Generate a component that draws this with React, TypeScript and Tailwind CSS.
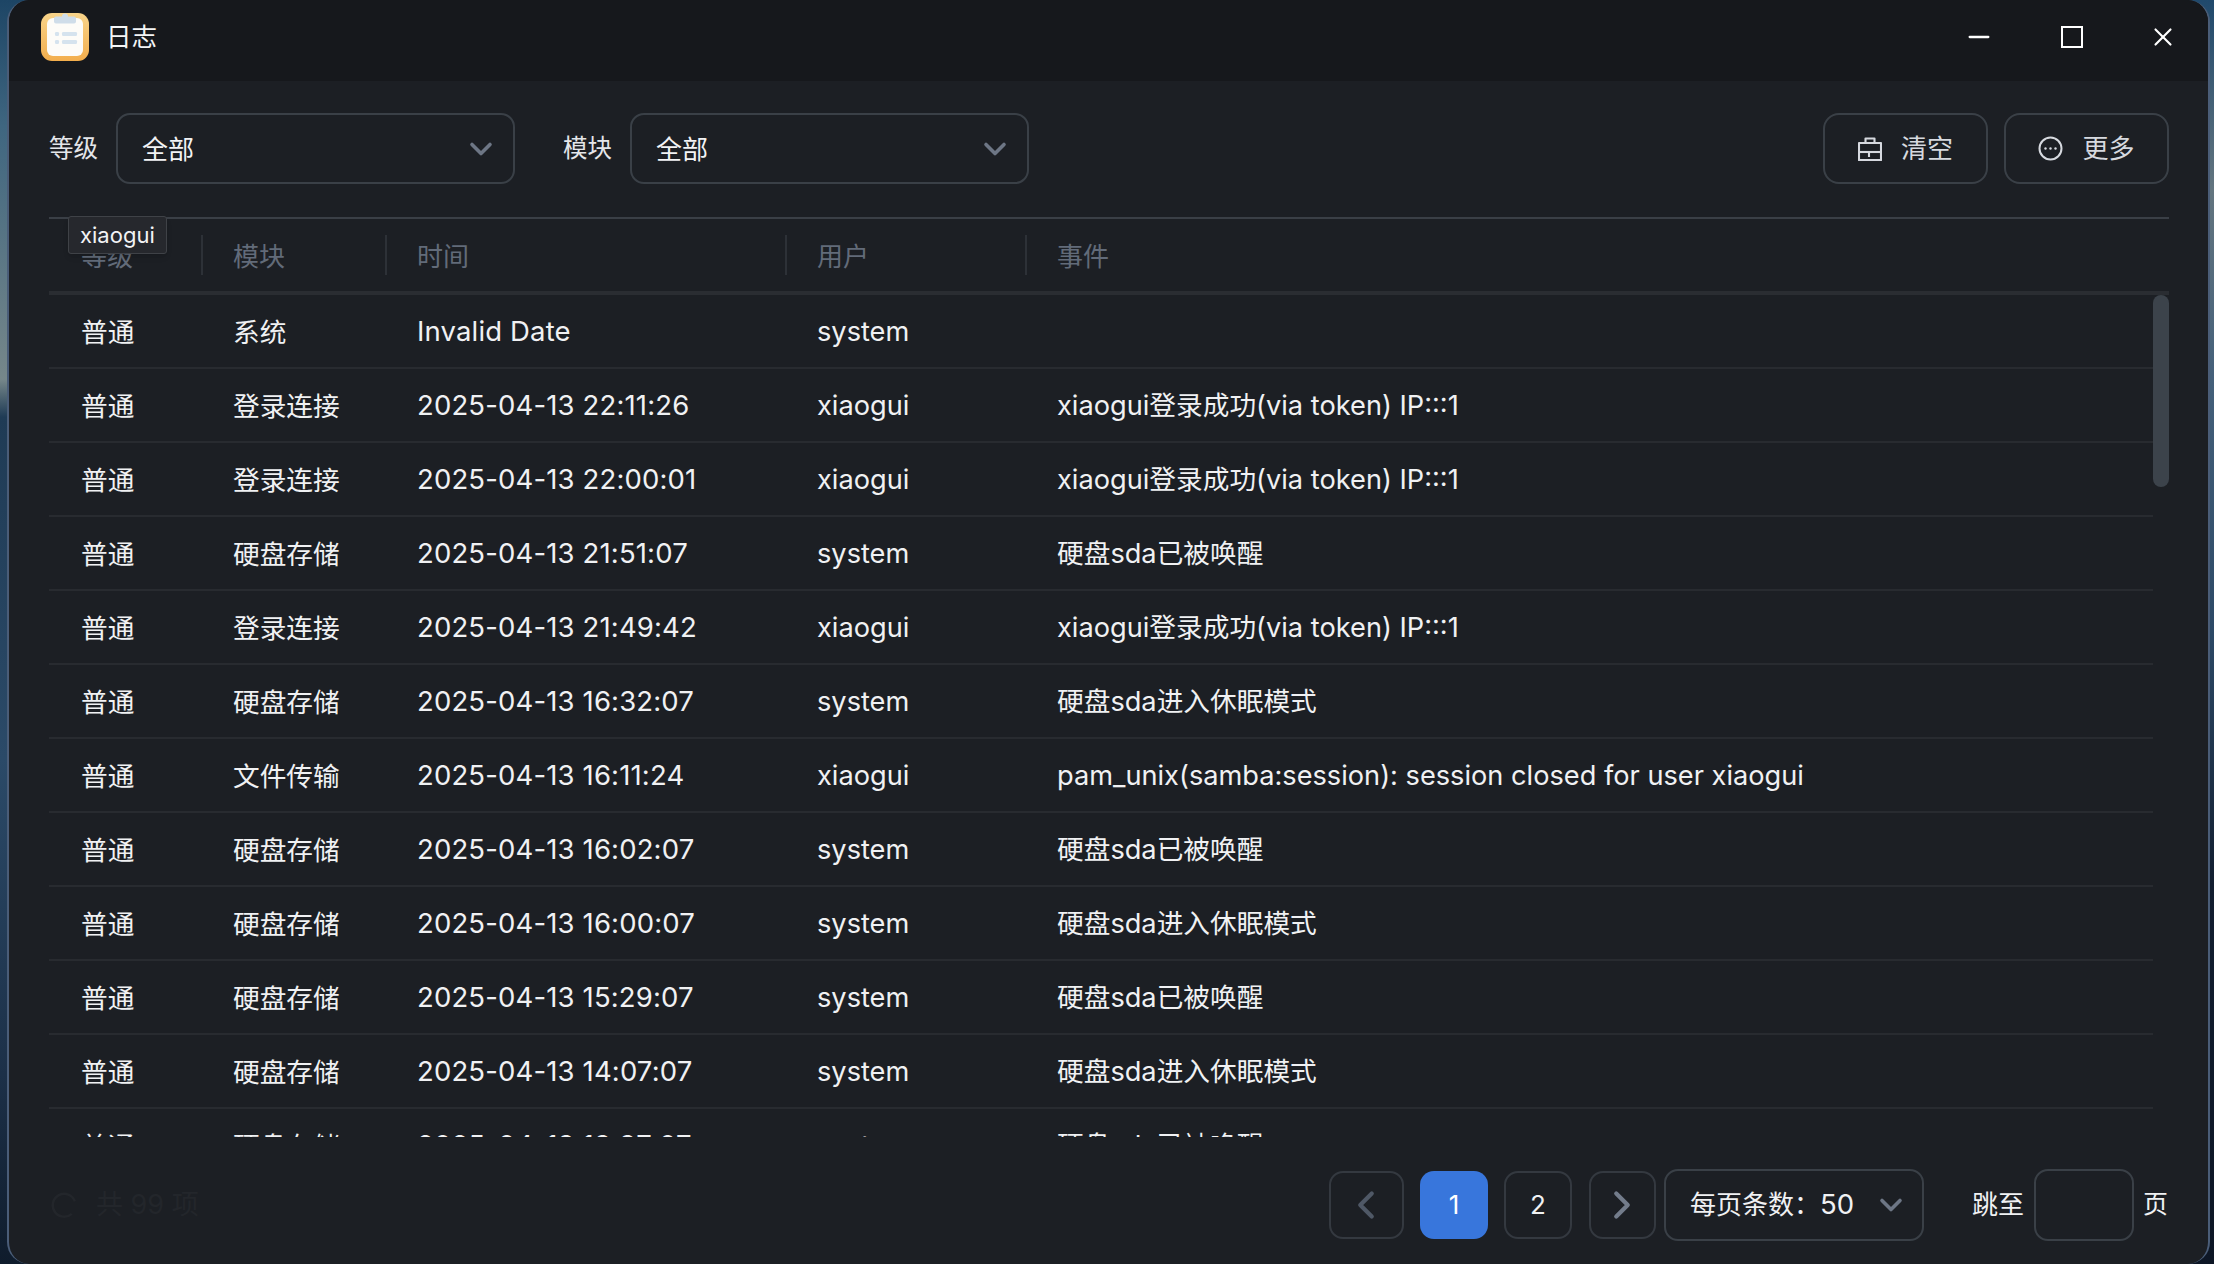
import { ChevronDown, ChevronLeft, ChevronRight, Minus, X } from 'lucide-react'

interface LogRow {
  level: string
  module: string
  time: string
  user: string
  event: string
}

const rows: LogRow[] = [
  { level: '普通', module: '系统', time: 'Invalid Date', user: 'system', event: '' },
  { level: '普通', module: '登录连接', time: '2025-04-13 22:11:26', user: 'xiaogui', event: 'xiaogui登录成功(via token) IP:::1' },
  { level: '普通', module: '登录连接', time: '2025-04-13 22:00:01', user: 'xiaogui', event: 'xiaogui登录成功(via token) IP:::1' },
  { level: '普通', module: '硬盘存储', time: '2025-04-13 21:51:07', user: 'system', event: '硬盘sda已被唤醒' },
  { level: '普通', module: '登录连接', time: '2025-04-13 21:49:42', user: 'xiaogui', event: 'xiaogui登录成功(via token) IP:::1' },
  { level: '普通', module: '硬盘存储', time: '2025-04-13 16:32:07', user: 'system', event: '硬盘sda进入休眠模式' },
  { level: '普通', module: '文件传输', time: '2025-04-13 16:11:24', user: 'xiaogui', event: 'pam_unix(samba:session): session closed for user xiaogui' },
  { level: '普通', module: '硬盘存储', time: '2025-04-13 16:02:07', user: 'system', event: '硬盘sda已被唤醒' },
  { level: '普通', module: '硬盘存储', time: '2025-04-13 16:00:07', user: 'system', event: '硬盘sda进入休眠模式' },
  { level: '普通', module: '硬盘存储', time: '2025-04-13 15:29:07', user: 'system', event: '硬盘sda已被唤醒' },
  { level: '普通', module: '硬盘存储', time: '2025-04-13 14:07:07', user: 'system', event: '硬盘sda进入休眠模式' },
  { level: '普通', module: '硬盘存储', time: '2025-04-13 13:37:07', user: 'system', event: '硬盘sda已被唤醒' },
]

// latin runs are set a little larger than the CJK ones
function EventText({ text }: { text: string }) {
  const parts = text.match(/[\u4e00-\u9fff]+|[^\u4e00-\u9fff]+/g) ?? []
  return (
    <>
      {parts.map((p, i) => (
        <span key={i} className={/[\u4e00-\u9fff]/.test(p) ? '' : 'text-[27.2px]'}>{p}</span>
      ))}
    </>
  )
}

function Select({ label }: { label: string }) {
  return (
    <div className="flex items-center gap-[18px]">
      <span className="text-[24.5px] text-[#e4e6ea]">{label}</span>
      <div className="flex h-[71px] w-[399px] items-center justify-between rounded-[14px] border-2 border-[#3a4047] pl-[24px] pr-[14px]">
        <span className="pt-[2px] text-[26px] text-[#f2f3f5]">全部</span>
        <ChevronDown size={36} strokeWidth={2.4} className="text-[#6d7685]" />
      </div>
    </div>
  )
}

function AppIcon() {
  return (
    <svg width="48" height="48" viewBox="0 0 48 48" className="shrink-0">
      <defs>
        <linearGradient id="icon-bg" x1="0" y1="0" x2="0" y2="1">
          <stop offset="0" stopColor="#f8d48a" />
          <stop offset="1" stopColor="#f3ae4c" />
        </linearGradient>
      </defs>
      <rect x="0" y="0" width="48" height="48" rx="11" fill="url(#icon-bg)" />
      <rect x="6" y="5" width="36" height="38" rx="6" fill="#fdfcf8" />
      <path d="M15 3.5h6a3 3 0 0 1 6 0h6a2 2 0 0 1 2 2v3a2 2 0 0 1-2 2H15a2 2 0 0 1-2-2v-3a2 2 0 0 1 2-2z" fill="#cfdde9" />
      <rect x="14" y="19" width="4" height="4" rx="1.2" fill="#d5e3ee" />
      <rect x="21" y="19" width="15" height="4" rx="1.2" fill="#d5e3ee" />
      <rect x="14" y="27" width="4" height="4" rx="1.2" fill="#d5e3ee" />
      <rect x="21" y="27" width="15" height="4" rx="1.2" fill="#d5e3ee" />
    </svg>
  )
}

function ClearIcon() {
  return (
    <svg width="24" height="24" viewBox="0 0 24 24" fill="none" stroke="currentColor" strokeWidth="2.1" strokeLinejoin="round">
      <path d="M7.5 6V1.5h9V6" />
      <path d="M1 6h22v17H1z" />
      <path d="M1 15h22" />
      <path d="M11 15v5" />
    </svg>
  )
}

function MoreIcon() {
  return (
    <svg width="25" height="25" viewBox="0 0 25 25" fill="none">
      <circle cx="12.5" cy="12.5" r="11" stroke="currentColor" strokeWidth="2" />
      <circle cx="7.5" cy="12.5" r="1.2" fill="currentColor" />
      <circle cx="12.5" cy="12.5" r="1.2" fill="currentColor" />
      <circle cx="17.5" cy="12.5" r="1.2" fill="currentColor" />
    </svg>
  )
}

function ActionButton({ icon, text }: { icon: React.ReactNode; text: string }) {
  return (
    <button className="flex h-[71px] w-[165px] items-center justify-center gap-[19px] rounded-[16px] border-2 border-[#3a4047] text-[26px] text-[#d6d9df]">
      {icon}
      <span>{text}</span>
    </button>
  )
}

export default function App() {
  return (
    <div className="flex h-screen w-screen overflow-hidden pl-[7px] pr-[4px] font-[Inter,'Noto_Sans_CJK_SC',sans-serif] [background:linear-gradient(180deg,#1d4565_0%,#3f6680_10%,#76878a_30%,#1f3b55_33%,#2b4a68_60%,#1c3048_85%,#0f1c2c_100%)_left/30px_100%_no-repeat,linear-gradient(180deg,#20496c_0%,#63757f_15%,#44607a_30%,#2c4966_50%,#121e30_70%,#0d1625_100%)_right/30px_100%_no-repeat,#1c2a3c]">
      <div className="flex h-full flex-1 flex-col overflow-hidden rounded-[22px] border-x-2 border-[#4a5d78] bg-[#1c1f24]">
        {/* title bar */}
        <div className="flex h-[81px] shrink-0 items-center justify-between bg-[#16181c] pb-[7px] pl-[32px]">
          <div className="flex items-center gap-[17px]">
            <AppIcon />
            <span className="text-[25.5px] text-[#f4f5f6]">日志</span>
          </div>
          <div className="flex items-center text-white">
            <Minus size={32} strokeWidth={1.7} className="mr-[66px]" />
            <div className="mr-[65px] h-[22px] w-[22px] border-2 border-white" />
            <X size={30} strokeWidth={1.7} className="mr-[30px]" />
          </div>
        </div>

        {/* filters */}
        <div className="flex shrink-0 items-center pl-[40px] pr-[39px] pt-[32px]">
          <div className="flex gap-[48px]">
            <Select label="等级" />
            <Select label="模块" />
          </div>
          <div className="ml-auto flex gap-[16px]">
            <ActionButton icon={<ClearIcon />} text="清空" />
            <ActionButton icon={<MoreIcon />} text="更多" />
          </div>
        </div>

        {/* table */}
        <div className="relative ml-[40px] mr-[39px] mt-[33px] flex shrink-0 flex-col">
          <div className="flex h-[78px] shrink-0 items-center border-t-2 border-b-4 border-t-[#3a3f46] border-b-[#2a2d32] text-[26px] text-[#626b79]">
            <div className="h-[40px] w-[152px] shrink-0 pl-[32px] pt-[2px] leading-[40px]">等级</div>
            <div className="h-[40px] w-[184px] shrink-0 border-l-2 border-[#2d3137] pl-[30px] pt-[2px] leading-[40px]">模块</div>
            <div className="h-[40px] w-[400px] shrink-0 border-l-2 border-[#2d3137] pl-[30px] pt-[2px] leading-[40px]">时间</div>
            <div className="h-[40px] w-[240px] shrink-0 border-l-2 border-[#2d3137] pl-[30px] pt-[2px] leading-[40px]">用户</div>
            <div className="h-[40px] flex-1 border-l-2 border-[#2d3137] pl-[30px] pt-[2px] leading-[40px]">事件</div>
          </div>
          <div className="mr-[16px] h-[842px] shrink-0 overflow-hidden">
            {rows.map(r => (
              <div key={r.time} className="flex h-[74px] items-center border-b-2 border-[#282b30] pt-[2px] text-[26.7px] text-[#f0f1f3]">
                <div className="w-[152px] shrink-0 pl-[32px]">{r.level}</div>
                <div className="w-[184px] shrink-0 pl-[32px]">{r.module}</div>
                <div className="w-[400px] shrink-0 pl-[32px] text-[27.5px] tracking-[0.15px]">{r.time}</div>
                <div className="w-[240px] shrink-0 pl-[32px] text-[27.2px]">{r.user}</div>
                <div className="flex-1 pl-[32px]"><EventText text={r.event} /></div>
              </div>
            ))}
          </div>
          {/* scrollbar thumb */}
          <div className="absolute right-0 top-[78px] h-[192px] w-[16px] rounded-full bg-[#3c434b]" />
          {/* tooltip */}
          <div className="absolute left-[19px] top-[-1px] rounded-[3px] border border-[#3f4247] bg-[#26282d] px-[11px] py-[3px] text-[22px] leading-[30px] text-[#f2f3f5] shadow-md">
            xiaogui
          </div>
        </div>

        {/* footer */}
        <div className="flex min-h-0 flex-1 items-center pl-[42px] pr-[40px] pt-[8px]">
          <div className="flex items-center gap-[18px] pt-[2px] text-[27px] text-[#23262b]">
            <svg width="27" height="27" viewBox="0 0 26 26" fill="none" stroke="currentColor" strokeWidth="2.4">
              <path d="M23 9A11 11 0 1 0 20 21" />
            </svg>
            <span>共 99 项</span>
          </div>
          <div className="ml-auto flex items-center text-[26px] text-[#f0f1f3]">
            <div className="flex h-[68px] w-[75px] items-center justify-center rounded-[14px] border-2 border-[#343940]">
              <ChevronLeft size={46} strokeWidth={2.2} className="text-[#4f5866]" />
            </div>
            <div className="ml-[16px] flex h-[68px] w-[68px] items-center justify-center rounded-[14px] bg-[#3876dc] text-white">1</div>
            <div className="ml-[16px] flex h-[68px] w-[68px] items-center justify-center rounded-[14px] border-2 border-[#343940]">2</div>
            <div className="ml-[17px] flex h-[68px] w-[67px] items-center justify-center rounded-[14px] border-2 border-[#343940]">
              <ChevronRight size={46} strokeWidth={2.2} className="text-[#737c8b]" />
            </div>
            <div className="ml-[8px] flex h-[72px] w-[260px] items-center justify-between rounded-[14px] border-2 border-[#3a4047] pl-[24px] pr-[13px]">
              <span>每页条数：<span className="text-[27.5px]">50</span></span>
              <ChevronDown size={36} strokeWidth={2.4} className="text-[#6d7685]" />
            </div>
            <span className="ml-[48px] text-[26px]">跳至</span>
            <div className="ml-[10px] h-[72px] w-[100px] rounded-[14px] border-2 border-[#3a4047]" />
            <span className="ml-[9px] text-[25px]">页</span>
          </div>
        </div>
      </div>
    </div>
  )
}
